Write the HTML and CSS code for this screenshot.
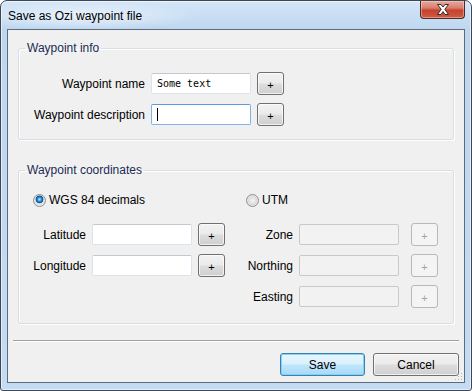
FILE: index.html
```html
<!DOCTYPE html>
<html lang="en">
<head>
    <meta charset="UTF-8">
    <meta name="viewport" content="width=device-width, initial-scale=1.0">
    <title>Save as Ozi waypoint file</title>
    <link rel="stylesheet" href="styles.css">
</head>
<body>
    <div class="window">
        <!-- Title bar -->
        <div class="titlebar">
            <span class="title">Save as Ozi waypoint file</span>
            <div class="close">
                <svg width="14" height="11" viewBox="0 0 14 11">
                    <path d="M1.5 0.5 H5 L7 3 L9 0.5 H12.5 L8.8 5.3 L12.5 10.5 H9 L7 7.6 L5 10.5 H1.5 L5.2 5.3 Z" fill="#fff" stroke="#3b2a2a" stroke-width="1" stroke-linejoin="round"/>
                </svg>
            </div>
        </div>

        <div class="client">
            <fieldset class="group">
                <legend>Waypoint info</legend>
                <div class="info-grid">
                    <label>Waypoint name</label>
                    <div class="textbox mono">Some text</div>
                    <button class="plus">+</button>

                    <label>Waypoint description</label>
                    <div class="textbox focused"><span class="caret"></span></div>
                    <button class="plus">+</button>
                </div>
            </fieldset>

            <fieldset class="group coords-group">
                <legend>Waypoint coordinates</legend>
                <div class="coords">
                    <div class="coord-col wgs">
                        <div class="radio-row"><span class="radio checked"></span>WGS 84 decimals</div>
                        <div class="coord-grid">
                            <label>Latitude</label>
                            <div class="textbox"></div>
                            <button class="plus">+</button>

                            <label>Longitude</label>
                            <div class="textbox"></div>
                            <button class="plus">+</button>
                        </div>
                    </div>
                    <div class="coord-col utm">
                        <div class="radio-row"><span class="radio"></span>UTM</div>
                        <div class="coord-grid">
                            <label>Zone</label>
                            <div class="textbox disabled"></div>
                            <button class="plus" disabled>+</button>

                            <label>Northing</label>
                            <div class="textbox disabled"></div>
                            <button class="plus" disabled>+</button>

                            <label>Easting</label>
                            <div class="textbox disabled"></div>
                            <button class="plus" disabled>+</button>
                        </div>
                    </div>
                </div>
            </fieldset>

            <div class="separator"></div>

            <div class="actions">
                <button class="btn default">Save</button>
                <button class="btn">Cancel</button>
            </div>

            <svg class="grip" width="9" height="9" viewBox="0 0 9 9">
                <rect x="7" y="1" width="1" height="1" fill="#b8b8b8"/>
                <rect x="4" y="4" width="1" height="1" fill="#b8b8b8"/>
                <rect x="7" y="4" width="1" height="1" fill="#b8b8b8"/>
                <rect x="1" y="7" width="1" height="1" fill="#b8b8b8"/>
                <rect x="4" y="7" width="1" height="1" fill="#b8b8b8"/>
                <rect x="7" y="7" width="1" height="1" fill="#b8b8b8"/>
            </svg>
        </div>
    </div>
</body>
</html>
```

FILE: styles.css
```css
/* General styles */
body {
    margin: 0;
    padding: 0;
    background: #fff;
    font-family: "Liberation Sans", Arial, sans-serif;
    font-size: 12px;
    color: #000;
}

/* Window frame */
.window {
    width: 472px;
    height: 391px;
    box-sizing: border-box;
    border: 1px solid #3d4753;
    border-radius: 7px 7px 3px 3px;
    background: linear-gradient(180deg, #d4e6f8 0, #bed7f0 28px, #c3dbf3 100%);
    box-shadow: inset 0 0 0 1px rgba(255, 255, 255, 0.55);
    display: flex;
    flex-direction: column;
}
.titlebar {
    height: 28px;
    display: flex;
    justify-content: space-between;
    align-items: flex-start;
    background: radial-gradient(ellipse 120px 14px at 80px 15px, rgba(255, 255, 255, 0.6), rgba(255, 255, 255, 0));
    border-radius: 6px 6px 0 0;
}
.title {
    margin: 7px 0 0 7px;
    line-height: 16px;
    color: #000;
}
.close {
    width: 45px;
    height: 18px;
    margin-right: 6px;
    box-sizing: border-box;
    border: 1px solid #4b2a26;
    border-top: none;
    border-radius: 0 0 4px 4px;
    background: linear-gradient(180deg, #e9a99a 0%, #d9806f 40%, #c4422f 55%, #cf5b43 100%);
    box-shadow: inset 0 0 0 1px rgba(255, 220, 210, 0.45);
    display: flex;
    align-items: center;
    justify-content: center;
}
.client {
    position: relative;
    flex: 1;
    margin: 0 6px 7px 6px;
    padding: 10px 10px 0 10px;
    border: 1px solid #5d6b7b;
    background: #f0f0f0;
    display: flex;
    flex-direction: column;
}

/* Group boxes */
.group {
    margin: 0;
    padding: 16px 0 13px 0;
    border: 1px solid #d5dfe5;
    border-radius: 3px;
    box-shadow: inset 1px 1px 0 #fff, 1px 1px 0 #fff;
    min-inline-size: 0;
}
.group legend {
    margin-left: 6px;
    padding: 0 2px;
    line-height: 16px;
    color: #1b2a55;
}
.coords-group {
    margin-top: 22px;
    padding: 14px 0 15px 0;
}

/* Waypoint info rows */
.info-grid {
    display: grid;
    grid-template-columns: 126px 100px 27px;
    grid-auto-rows: 23px;
    column-gap: 6px;
    row-gap: 8px;
    align-items: center;
}
label {
    text-align: right;
    white-space: nowrap;
}

/* Text boxes */
.textbox {
    height: 21px;
    box-sizing: border-box;
    padding: 0 5px;
    background: #fff;
    border: 1px solid #dde3ea;
    border-top-color: #c3c8ce;
    border-radius: 2px;
    display: flex;
    align-items: center;
}
.textbox.mono {
    font-family: "DejaVu Sans Mono", "Liberation Mono", monospace;
    font-size: 10px;
}
.textbox.focused {
    border-color: #7eb4ea;
    border-top-color: #569de5;
}
.caret {
    width: 1px;
    height: 13px;
    background: #000;
}
.textbox.disabled {
    background: #f2f2f2;
    border-color: #c9c9c9;
}

/* Small "+" buttons */
.plus {
    width: 27px;
    height: 23px;
    padding: 0;
    font-family: "Liberation Sans", Arial, sans-serif;
    font-size: 11px;
    color: #000;
    border: 1px solid #707070;
    border-radius: 3px;
    background: linear-gradient(180deg, #f2f2f2 0%, #ebebeb 48%, #dddddd 52%, #cfcfcf 100%);
    box-shadow: inset 0 0 0 1px rgba(255, 255, 255, 0.7);
    padding-top: 2px;
}
.plus:disabled {
    border-color: #b5b9bc;
    background: #f4f4f4;
    box-shadow: none;
    color: #a3a3a3;
}

/* Coordinates */
.coords {
    padding-left: 14px;
    display: grid;
    grid-template-columns: 213px 1fr;
}
.radio-row {
    height: 16px;
    margin-bottom: 15px;
    display: flex;
    align-items: center;
    gap: 3px;
}
.radio {
    width: 13px;
    height: 13px;
    box-sizing: border-box;
    border: 1px solid #8c8e90;
    border-radius: 50%;
    background: radial-gradient(circle at 50% 50%, #f6f6f6 0, #dcdcdc 4px, #eaeaea 6px);
}
.radio.checked {
    background: radial-gradient(circle at 50% 40%, #bfe9ff 0, #2b8fd8 2px, #0b4f93 3.5px, #dcdcdc 4.2px, #eaeaea 6px);
}
.coord-grid {
    display: grid;
    grid-auto-rows: 23px;
    row-gap: 8px;
    column-gap: 6px;
    align-items: center;
}
.wgs .coord-grid {
    grid-template-columns: 53px 100px 26px;
}
.utm .coord-grid {
    grid-template-columns: 47px 100px 27px;
}
.utm .plus {
    margin-left: 6px;
}

/* Bottom bar */
.separator {
    margin: 16px -5px 0 -5px;
    border-top: 1px solid #a0a0a0;
    border-bottom: 1px solid #fff;
}
.actions {
    margin: 11px -5px 0 0;
    display: flex;
    justify-content: flex-end;
    gap: 8px;
}
.btn {
    height: 23px;
    font-family: "Liberation Sans", Arial, sans-serif;
    font-size: 12px;
    color: #000;
    border: 1px solid #707070;
    border-radius: 3px;
    background: linear-gradient(180deg, #f2f2f2 0%, #ebebeb 48%, #dddddd 52%, #cfcfcf 100%);
    box-shadow: inset 0 0 0 1px rgba(255, 255, 255, 0.7);
    width: 86px;
}
.btn.default {
    width: 85px;
    border-color: #3c7fb1;
    background: linear-gradient(180deg, #eaf6fd 0%, #d9f0fc 48%, #bee6fd 52%, #a7d9f5 100%);
    box-shadow: inset 0 0 0 1px #7fd3f5;
}
.grip {
    position: absolute;
    right: 1px;
    bottom: 1px;
}
```
